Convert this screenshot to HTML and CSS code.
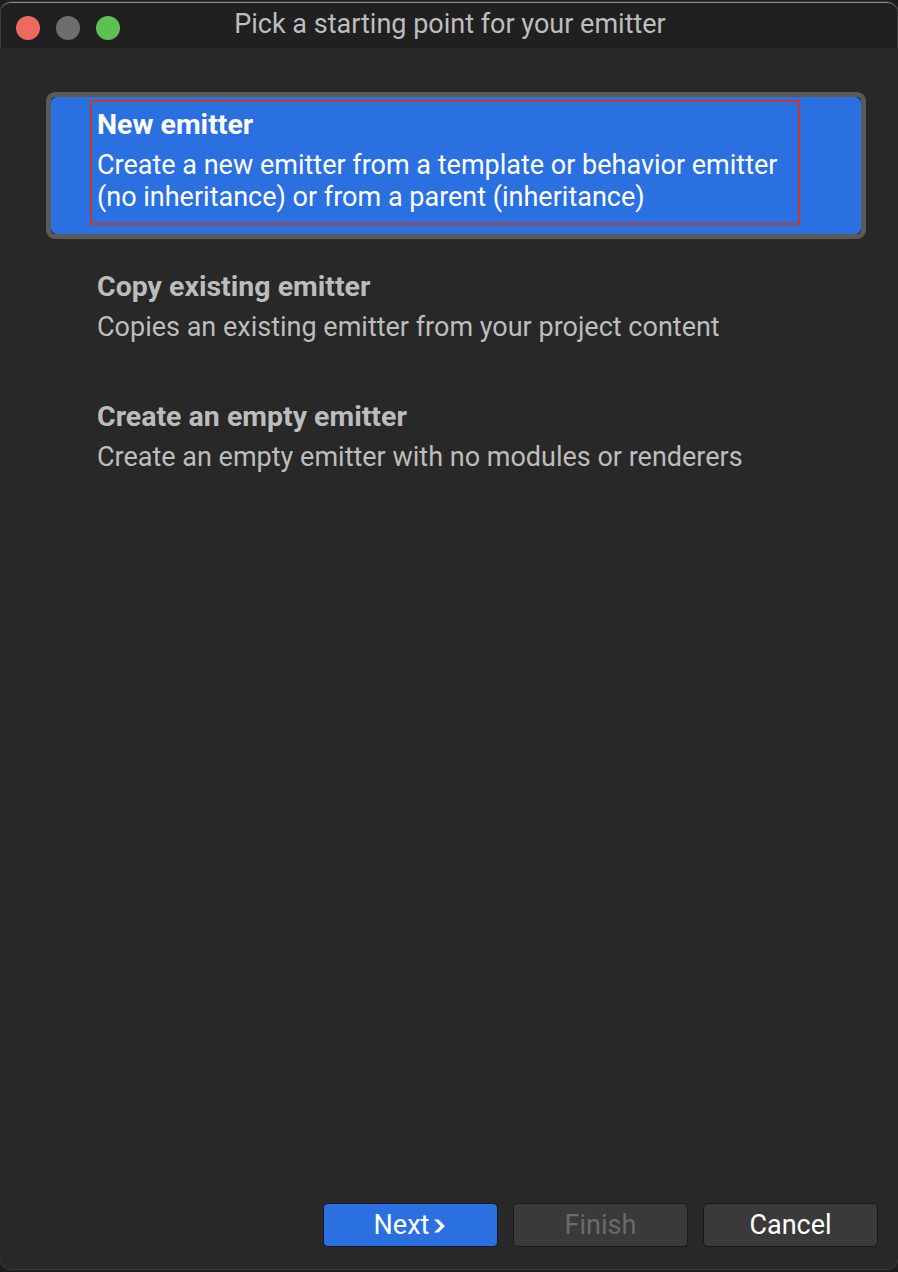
FILE: index.html
```html
<!DOCTYPE html>
<html>
<head>
<meta charset="utf-8">
<link rel="stylesheet" href="styles.css">
</head>
<body>
<div class="window">
  <div class="titlebar">
    <div class="lights">
      <span class="light red"></span>
      <span class="light gray"></span>
      <span class="light green"></span>
    </div>
    <div class="title">Pick a starting point for your emitter</div>
  </div>
  <div class="content">
    <div class="list">
      <div class="item selected">
        <div class="item-inner">
          <div class="item-focus">
            <div class="item-title">New emitter</div>
            <div class="item-desc">Create a new emitter from a template or behavior emitter<br>(no inheritance) or from a parent (inheritance)</div>
          </div>
        </div>
      </div>
      <div class="item">
        <div class="item-inner">
          <div class="item-focus">
            <div class="item-title">Copy existing emitter</div>
            <div class="item-desc">Copies an existing emitter from your project content</div>
          </div>
        </div>
      </div>
      <div class="item">
        <div class="item-inner">
          <div class="item-focus">
            <div class="item-title">Create an empty emitter</div>
            <div class="item-desc">Create an empty emitter with no modules or renderers</div>
          </div>
        </div>
      </div>
    </div>
    <div class="footer">
      <button class="btn primary">Next<svg class="chev" width="15" height="16" viewBox="0 0 15 16"><path d="M2 1.5 H6.5 L13 8 L6.5 14.5 H2 L8.5 8 Z" fill="#fff"/></svg></button>
      <button class="btn disabled">Finish</button>
      <button class="btn">Cancel</button>
    </div>
  </div>
</div>
</body>
</html>
```

FILE: styles.css
```css
html, body {
  margin: 0;
  padding: 0;
}
body {
  background: #1e1e1e;
  width: 898px;
  height: 1272px;
  overflow: hidden;
  font-family: Roboto, "Liberation Sans", sans-serif;
}
.window {
  margin-top: 2px;
  height: 1266px;
  background: #282828;
  border-radius: 12px;
  border-top: 1px solid #8a8a8a;
  box-shadow: 0 0 0 1px #3a3a3a;
  display: flex;
  flex-direction: column;
  overflow: hidden;
}
.titlebar {
  height: 45px;
  background: #202020;
  display: flex;
  align-items: center;
  position: relative;
  border-left: 1px solid #3c3c3c;
  border-right: 1px solid #3c3c3c;
}
.lights {
  display: flex;
  gap: 16px;
  padding-left: 15px;
  padding-top: 4px;
}
.light {
  width: 24px;
  height: 24px;
  border-radius: 50%;
  display: block;
}
.light.red { background: #ec6a5e; }
.light.gray { background: #6e6e6e; }
.light.green { background: #5cc152; }
.title {
  position: absolute;
  left: 0;
  right: 0;
  top: -1px;
  line-height: 45px;
  text-align: center;
  color: #bdbdbd;
  font-size: 27px;
  padding-left: 2px;
}
.content {
  flex: 1;
  display: flex;
  flex-direction: column;
  padding: 44px 20px 22px 46px;
}
.list {
  flex: 1;
  display: flex;
  flex-direction: column;
  gap: 15px;
}
.item {
  width: 820px;
  box-sizing: border-box;
  border: 5px solid transparent;
  border-radius: 9px;
}
.item.selected {
  border-color: #5a5a5a;
}
.item-inner {
  padding: 3px 61px 9px 39px;
  border-radius: 6px;
}
.item.selected .item-inner {
  background: #2a70e0;
}
.item-focus {
  border: 2px solid transparent;
  padding: 7px 5px 10px 5px;
}
.item.selected .item-focus {
  border-color: #c8392a;
}
.item-title {
  font-size: 28.5px;
  line-height: 32px;
  font-weight: 700;
  color: #bcbcbc;
}
.item-desc {
  margin-top: 8px;
  font-size: 27px;
  line-height: 32px;
  color: #bdbdbd;
}
.item.selected .item-title,
.item.selected .item-desc {
  color: #ffffff;
}
.footer {
  display: flex;
  justify-content: flex-end;
  gap: 15px;
}
.btn {
  width: 175px;
  height: 44px;
  box-sizing: border-box;
  border: 1px solid #1a1a1a;
  border-radius: 5px;
  background: #3a3a3a;
  color: #ffffff;
  font-family: Roboto, "Liberation Sans", sans-serif;
  font-size: 27px;
  display: flex;
  align-items: center;
  justify-content: center;
  gap: 3px;
  padding: 0;
}
.btn.primary {
  background: #2a70e0;
}
.btn.disabled {
  color: #6a6a6a;
}
.chev {
  display: block;
  margin-top: 2px;
}
```
